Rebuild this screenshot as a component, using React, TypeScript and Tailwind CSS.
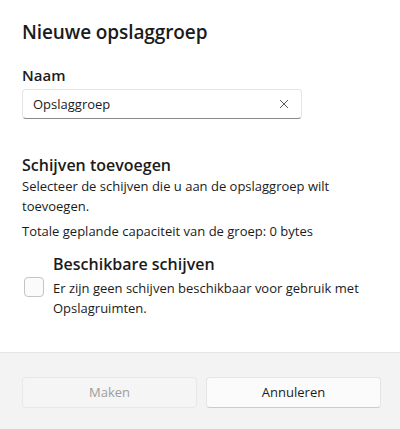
import React from "react";

export default function App() {
  return (
    <div
      className="w-[400px] h-[429px] bg-white flex flex-col text-[#1b1b1b] overflow-hidden"
      style={{ fontFamily: '"Open Sans", "Noto Sans", sans-serif' }}
    >
      <div className="flex-1 flex flex-col px-[22px]">
        <div className="pt-[18px] text-[19px] leading-[28px] font-semibold tracking-[-0.1px]">
          Nieuwe opslaggroep
        </div>
        <div className="mt-[18px] text-[15px] leading-[22px] font-semibold">Naam</div>
        <div className="mt-[3px] w-[280px] h-[30px] rounded-[4px] border border-[#e5e5e5] border-b-[#8a8a8a] bg-white flex items-center pl-[10px] pr-[12px]">
          <span className="flex-1 text-[13px] leading-[20px]">Opslaggroep</span>
          <svg width="10" height="10" viewBox="0 0 10 10" className="text-[#5c5c5c]">
            <path d="M1 1L9 9M9 1L1 9" stroke="currentColor" strokeWidth="1" fill="none" />
          </svg>
        </div>
        <div className="mt-[35px] text-[16px] leading-[22px] font-semibold">Schijven toevoegen</div>
        <div className="text-[13px] leading-[20px] w-[330px]">
          Selecteer de schijven die u aan de opslaggroep wilt toevoegen.
        </div>
        <div className="mt-[5px] text-[13px] leading-[20px]">
          Totale geplande capaciteit van de groep: 0 bytes
        </div>
        <div className="mt-[12px] flex">
          <div className="ml-[2px] mt-[24px] w-[20px] h-[20px] rounded-[4px] border border-[#c4c4c4] bg-[#fbfbfb] shrink-0" />
          <div className="ml-[9px] flex flex-col">
            <div className="text-[16px] leading-[22px] font-semibold">Beschikbare schijven</div>
            <div className="mt-[3px] text-[13px] leading-[20px] w-[320px]">
              Er zijn geen schijven beschikbaar voor gebruik met Opslagruimten.
            </div>
          </div>
        </div>
      </div>
      <div className="h-[77px] shrink-0 border-t border-[#e5e5e5] bg-[#f3f3f3] pt-[24px] pl-[22px] flex gap-[9px]">
        <button className="w-[175px] h-[31px] rounded-[4px] border border-[#e8e8e8] bg-[#f5f5f5] text-[13px] text-[#9d9d9d]">
          Maken
        </button>
        <button className="w-[175px] h-[31px] rounded-[4px] border border-[#e5e5e5] border-b-[#cccccc] bg-[#fbfbfb] text-[13px] text-[#1b1b1b]">
          Annuleren
        </button>
      </div>
    </div>
  );
}
